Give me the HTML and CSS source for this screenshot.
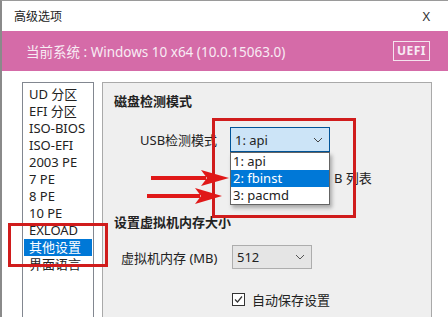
FILE: index.html
```html
<!DOCTYPE html>
<html lang="zh-CN">
<head>
    <meta charset="UTF-8">
    <title>高级选项</title>
    <link rel="stylesheet" href="styles.css">
</head>
<body>
    <div class="window">
        <div class="titlebar">
            <span class="title">高级选项</span>
            <span class="close">X</span>
        </div>
        <div class="sysbar">
            <span>当前系统 : Windows 10 x64 (10.0.15063.0)</span>
            <span class="uefi">UEFI</span>
        </div>
        <div class="content">
            <ul class="navlist">
                <li>UD 分区</li>
                <li>EFI 分区</li>
                <li>ISO-BIOS</li>
                <li>ISO-EFI</li>
                <li>2003 PE</li>
                <li>7 PE</li>
                <li>8 PE</li>
                <li>10 PE</li>
                <li>EXLOAD</li>
                <li class="active">其他设置</li>
                <li>界面语言</li>
            </ul>
            <div class="panel">
                <h3>磁盘检测模式</h3>
                <div class="row usb-row">
                    <label>USB检测模式</label>
                    <div class="combo open">
                        <span>1: api</span>
                        <svg width="10" height="6" viewBox="0 0 10 6"><path d="M1 1 L5 5 L9 1" fill="none" stroke="#444" stroke-width="1"/></svg>
                        <ul class="droplist">
                            <li>1: api</li>
                            <li class="sel">2: fbinst</li>
                            <li>3: pacmd</li>
                        </ul>
                    </div>
                </div>
                <div class="row hidden-row">
                    <span>B 列表</span>
                </div>
                <h3 class="mem-title">设置虚拟机内存大小</h3>
                <div class="row mem-row">
                    <label>虚拟机内存 (MB)</label>
                    <div class="combo gray">
                        <span>512</span>
                        <svg width="10" height="6" viewBox="0 0 10 6"><path d="M1 1 L5 5 L9 1" fill="none" stroke="#555" stroke-width="1"/></svg>
                    </div>
                </div>
                <div class="row check-row">
                    <span class="checkbox">
                        <svg width="11" height="11" viewBox="0 0 11 11"><path d="M2 5.5 L4.5 8 L9 2.5" fill="none" stroke="#333" stroke-width="1.2"/></svg>
                    </span>
                    <span>自动保存设置</span>
                </div>
            </div>
        </div>

        <div class="mark mark-left"></div>
        <div class="mark mark-right"></div>
        <svg class="arrows" width="448" height="317" viewBox="0 0 448 317">
            <line x1="151" y1="178" x2="206" y2="178" stroke="#e01818" stroke-width="4"/>
            <path d="M201 170 L229 178 L201 186 L207 178 Z" fill="#e01818"/>
            <line x1="147" y1="196" x2="200" y2="196" stroke="#e01818" stroke-width="4"/>
            <path d="M195 188 L222 196 L195 204 L201 196 Z" fill="#e01818"/>
        </svg>
    </div>
</body>
</html>
```

FILE: styles.css
```css
body {
    margin: 0;
    font-family: "Noto Sans", "Noto Sans CJK SC", sans-serif;
    font-size: 13px;
    color: #222;
    background: #fff;
}

.window {
    position: relative;
    width: 448px;
    height: 317px;
    overflow: hidden;
    border-left: 2px solid #8a8a8a;
    border-top: 1px solid #9a9a9a;
    box-sizing: border-box;
}

.titlebar {
    display: flex;
    justify-content: space-between;
    align-items: center;
    height: 30px;
    padding: 0 18px 0 12px;
    font-size: 12px;
}

.close {
    font-size: 13px;
    color: #333;
}

.sysbar {
    display: flex;
    justify-content: space-between;
    align-items: center;
    height: 40px;
    padding: 0 18px 0 24px;
    background: #d56ba8;
    color: #f8ecf4;
    font-size: 13.5px;
}

.uefi {
    border: 1px solid #f4e4ee;
    padding: 0 3px;
    line-height: 18px;
    font-weight: bold;
    font-size: 12px;
    letter-spacing: 0.5px;
}

.content {
    display: flex;
    align-items: flex-start;
    padding: 11px 0 0 20px;
}

.navlist {
    list-style: none;
    margin: 0;
    padding: 1px;
    width: 68px;
    height: 260px;
    border: 1px solid #828790;
}

.navlist li {
    height: 17px;
    line-height: 17px;
    padding-left: 5px;
    white-space: nowrap;
}

.navlist li:first-child {
    margin-top: 2px;
}

.navlist li.active {
    background: #0078d7;
    color: #fff;
}

.panel {
    margin-left: 8px;
    width: 330px;
    height: 260px;
    background: #efefef;
    border: 1px solid #a9a9a9;
    padding: 0 0 0 11px;
    box-sizing: border-box;
}

.panel h3 {
    margin: 9px 0 0;
    font-size: 13px;
    font-weight: bold;
    line-height: 18px;
}

.row {
    display: flex;
    align-items: center;
}

.usb-row {
    margin-top: 17px;
    padding-left: 26px;
}

.usb-row label {
    width: 90px;
}

.combo {
    position: relative;
    display: flex;
    justify-content: space-between;
    align-items: center;
    box-sizing: border-box;
    padding: 0 6px 0 4px;
}

.combo.open {
    width: 100px;
    height: 25px;
    background: #cce4f7;
    border: 1px solid #005499;
}

.combo.gray {
    width: 80px;
    height: 24px;
    background: #e5e5e5;
    border: 1px solid #adadad;
}

.droplist {
    position: absolute;
    left: -1px;
    top: 24px;
    width: 100px;
    margin: 0;
    padding: 0;
    list-style: none;
    background: #fff;
    border: 1px solid #646464;
    box-sizing: border-box;
    box-shadow: 2px 3px 4px rgba(0, 0, 0, 0.3);
}

.droplist li {
    height: 17px;
    line-height: 17px;
    padding-left: 2px;
}

.droplist li.sel {
    background: #0078d7;
    color: #fff;
}

.hidden-row {
    margin-top: 16px;
    padding-left: 220px;
}

.panel h3.mem-title {
    margin-top: 26px;
}

.mem-row {
    margin-top: 14px;
    padding-left: 7px;
}

.mem-row label {
    width: 111px;
}

.check-row {
    margin-top: 21px;
    padding-left: 118px;
}

.checkbox {
    display: flex;
    width: 11px;
    height: 11px;
    border: 1px solid #333;
    background: #fff;
    margin-right: 7px;
}

.mark {
    position: absolute;
    border: 3px solid #d01c1c;
}

.mark-left {
    left: 6px;
    top: 222px;
    width: 94px;
    height: 38px;
}

.mark-right {
    left: 210px;
    top: 117px;
    width: 138px;
    height: 94px;
}

.arrows {
    position: absolute;
    left: -2px;
    top: -1px;
}
```
